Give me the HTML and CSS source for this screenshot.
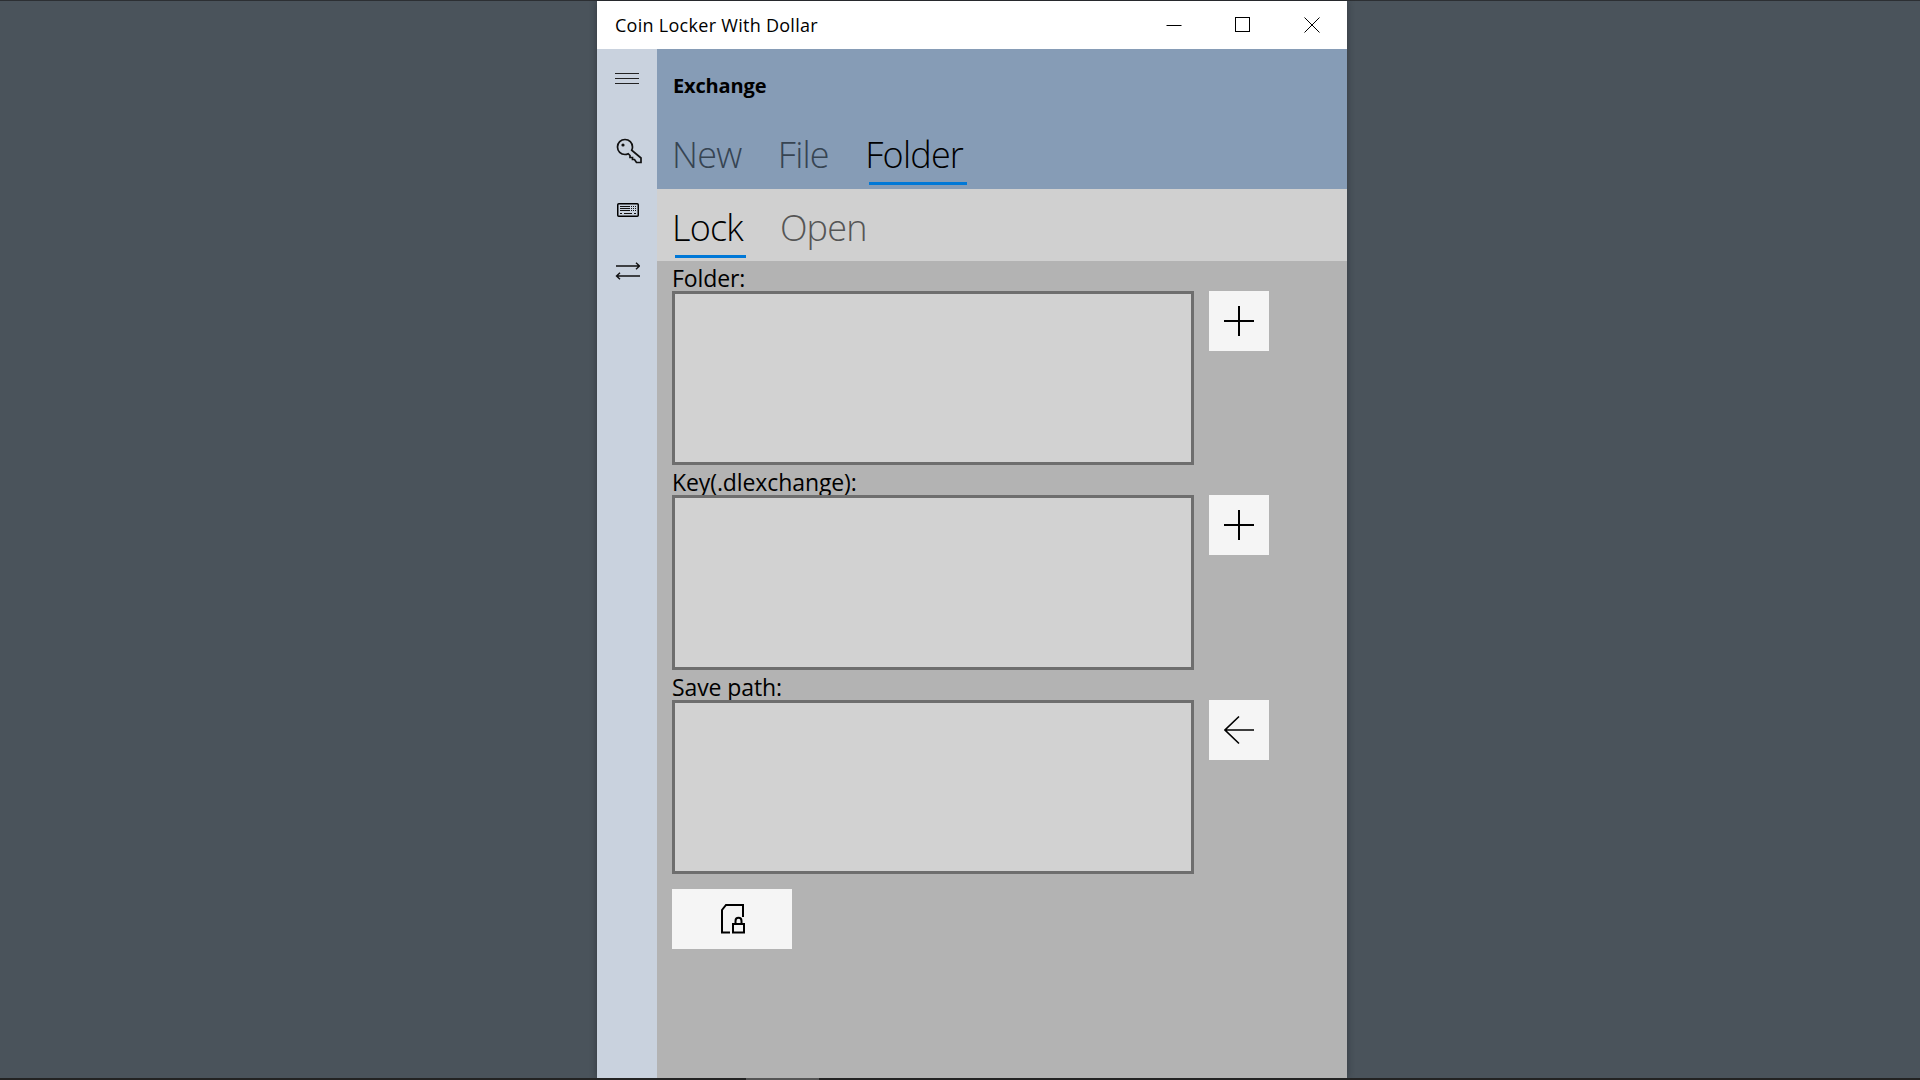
FILE: index.html
```html
<!DOCTYPE html>
<html lang="en">
<head>
<meta charset="utf-8">
<title>Coin Locker With Dollar</title>
<link rel="stylesheet" href="styles.css">
</head>
<body>
<div class="desktop">
  <div class="window">
    <div class="titlebar">
      <span class="app-title">Coin Locker With Dollar</span>
      <div class="caption">
        <span class="caption-btn"><svg width="16" height="16" viewBox="0 0 16 16"><path d="M0.5 8.5H15.5" stroke="#000" fill="none"/></svg></span>
        <span class="caption-btn"><svg width="16" height="16" viewBox="0 0 16 16"><rect x="0.5" y="0.5" width="14" height="14" stroke="#000" fill="none"/></svg></span>
        <span class="caption-btn"><svg width="16" height="16" viewBox="0 0 16 16"><path d="M0.5 0.5L15.5 15.5M15.5 0.5L0.5 15.5" stroke="#000" fill="none"/></svg></span>
      </div>
    </div>
    <div class="body">
      <nav class="sidebar">
        <span class="nav-icon nav-menu"><svg width="24" height="13" viewBox="0 0 24 13"><path d="M0 1.5H24M0 6.5H24M0 11.5H24" stroke="#222" fill="none"/></svg></span>
        <span class="nav-icon nav-key"><svg width="26" height="26" viewBox="0 0 26 26"><path d="M9 1.5C4.8 1.5 1.5 4.8 1.5 9S4.8 16.5 9 16.5C10.3 16.5 11.2 16.2 12.2 15.7L14 17.5V19.5H16.5V21.5H18.5L20.5 24.5H25V20L15.7 12.2C16.2 11.2 16.5 10.3 16.5 9C16.5 4.8 13.2 1.5 9 1.5Z" stroke="#111" stroke-width="1.7" fill="none"/><circle cx="7" cy="7" r="1.6" fill="#111"/></svg></span>
        <span class="nav-icon nav-keyboard"><svg width="22" height="14" viewBox="0 0 22 14"><rect x="0.75" y="0.75" width="20.5" height="12.5" rx="1" stroke="#000" stroke-width="1.5" fill="none"/><path d="M3 3.5H19M3 5.5H19M3 7.5H19" stroke="#111" stroke-dasharray="1.5 0.6" fill="none" shape-rendering="crispEdges"/><path d="M3 10.5H5M7 10.5H15M17 10.5H19" stroke="#111" fill="none" shape-rendering="crispEdges"/></svg></span>
        <span class="nav-icon nav-swap"><svg width="25" height="18" viewBox="0 0 25 18"><path d="M1 4H24.5M21 0.7L24.5 4L21 7.3M25 14H1.5M5 10.7L1.5 14L5 17.3" stroke="#111" stroke-width="1.4" fill="none"/></svg></span>
      </nav>
      <main class="main">
        <header class="header">
          <div class="page-title">Exchange</div>
          <div class="tabs">
            <span class="tab">New</span>
            <span class="tab">File</span>
            <span class="tab tab-active">Folder</span>
          </div>
        </header>
        <div class="subbar">
          <span class="subtab subtab-active">Lock</span>
          <span class="subtab">Open</span>
        </div>
        <section class="content">
          <label class="field-label">Folder:</label>
          <div class="field-row">
            <div class="textbox"></div>
            <span class="icon-btn"><svg width="30" height="30" viewBox="0 0 30 30"><path d="M0 15H30M15 0V30" stroke="#000" stroke-width="2" fill="none"/></svg></span>
          </div>
          <label class="field-label">Key(.dlexchange):</label>
          <div class="field-row">
            <div class="textbox"></div>
            <span class="icon-btn"><svg width="30" height="30" viewBox="0 0 30 30"><path d="M0 15H30M15 0V30" stroke="#000" stroke-width="2" fill="none"/></svg></span>
          </div>
          <label class="field-label">Save path:</label>
          <div class="field-row">
            <div class="textbox"></div>
            <span class="icon-btn"><svg width="30" height="30" viewBox="0 0 30 30"><path d="M30 15H1M15 1.5L1 15L15 28.5" stroke="#000" stroke-width="1.6" fill="none"/></svg></span>
          </div>
          <span class="lock-btn"><svg class="lock-icon" width="26" height="30" viewBox="0 0 26 30"><path d="M10 28.5H2V6L6 1H23V13" stroke="#000" stroke-width="2" fill="none"/><rect x="13" y="20" width="11" height="8.5" stroke="#000" stroke-width="2" fill="none"/><path d="M15.5 20V17C15.5 12.8 21.5 12.8 21.5 17V20" stroke="#000" stroke-width="2" fill="none"/></svg></span>
        </section>
      </main>
    </div>
  </div>
  <div class="taskbar"><span class="task-item"></span></div>
</div>
</body>
</html>
```
FILE: styles.css
```css
html, body {
  margin: 0;
  padding: 0;
  height: 100%;
  overflow: hidden;
}
body {
  font-family: "Open Sans", "Noto Sans", "Liberation Sans", sans-serif;
  color: #000;
}
.desktop {
  box-sizing: border-box;
  width: 1920px;
  height: 1080px;
  background: #4a535b;
  border-top: 1px solid #2c2f33;
  display: flex;
  flex-direction: column;
}
.window {
  width: 750px;
  margin-left: 597px;
  flex: 1;
  min-height: 0;
  display: flex;
  flex-direction: column;
  box-shadow: 0 0 7px rgba(20, 25, 28, 0.45);
}
.titlebar {
  height: 48px;
  background: #fff;
  display: flex;
  align-items: center;
  justify-content: space-between;
  padding-left: 18px;
}
.app-title {
  font-size: 18px;
  letter-spacing: 0.28px;
}
.caption {
  display: flex;
  align-items: center;
  padding-right: 27px;
  gap: 53px;
  height: 100%;
}
.caption-btn {
  width: 16px;
  height: 16px;
  display: block;
}
.caption-btn svg, .nav-icon svg, .icon-btn svg, .lock-btn svg { display: block; }
.body {
  flex: 1;
  min-height: 0;
  display: flex;
}
.sidebar {
  width: 60px;
  background: #c9d2de;
  display: flex;
  flex-direction: column;
  align-items: flex-start;
  padding-left: 18px;
  box-sizing: border-box;
}
.nav-menu { margin-top: 23px; }
.nav-key { margin-top: 53px; margin-left: 1px; }
.nav-keyboard { margin-top: 39px; margin-left: 2px; }
.nav-swap { margin-top: 45px; }
.main {
  flex: 1;
  min-width: 0;
  display: flex;
  flex-direction: column;
}
.header {
  height: 140px;
  background: #869cb6;
  padding-left: 15px;
  box-sizing: border-box;
}
.page-title {
  font-size: 20px;
  font-weight: 700;
  letter-spacing: -0.15px;
  line-height: 28px;
  padding-top: 23px;
  padding-left: 1px;
}
.tabs {
  display: flex;
  gap: 36.5px;
  margin-top: 30px;
}
.tab {
  font-size: 36px;
  font-weight: 300;
  line-height: 50px;
  letter-spacing: -0.8px;
  color: #364452;
  height: 58px;
  box-sizing: border-box;
  position: relative;
}
.tab-active { color: #000; }
.tab-active::after {
  content: "";
  position: absolute;
  left: 4px;
  right: -4px;
  top: 52px;
  height: 3px;
  background: #0078d7;
}
.subbar {
  height: 72px;
  background: #d0d0d0;
  display: flex;
  gap: 37px;
  padding-left: 15px;
}
.subtab {
  font-size: 36px;
  font-weight: 300;
  line-height: 50px;
  letter-spacing: -0.8px;
  color: #555;
  padding-top: 14px;
  position: relative;
  box-sizing: border-box;
}
.subtab-active { color: #000; }
.subtab-active::after {
  content: "";
  position: absolute;
  left: 3px;
  right: -3px;
  top: 66px;
  height: 3px;
  background: #0078d7;
}
.content {
  flex: 1;
  min-height: 0;
  background: #b3b3b3;
  padding-left: 15px;
}
.field-label {
  display: block;
  height: 30px;
  font-size: 23px;
  line-height: 35px;
  letter-spacing: -0.1px;
}
.field-row {
  display: flex;
  gap: 15px;
  align-items: flex-start;
  position: relative;
}
.textbox {
  box-sizing: border-box;
  width: 522px;
  height: 174.4px;
  background: #d2d2d2;
  border: 3px solid #6e6e6e;
}
.icon-btn {
  width: 60px;
  height: 60px;
  background: #f5f5f5;
  display: flex;
  align-items: center;
  justify-content: center;
}
.lock-btn {
  margin-top: 15px;
  width: 120px;
  height: 60px;
  background: #f5f5f5;
  display: flex;
  align-items: center;
  justify-content: center;
}
.lock-icon { margin-left: 2px; }
.taskbar {
  height: 2px;
  background: #232323;
  position: relative;
  z-index: 1;
}
.task-item {
  display: block;
  width: 73px;
  height: 2px;
  margin-left: 746px;
  background: #555;
}
```
